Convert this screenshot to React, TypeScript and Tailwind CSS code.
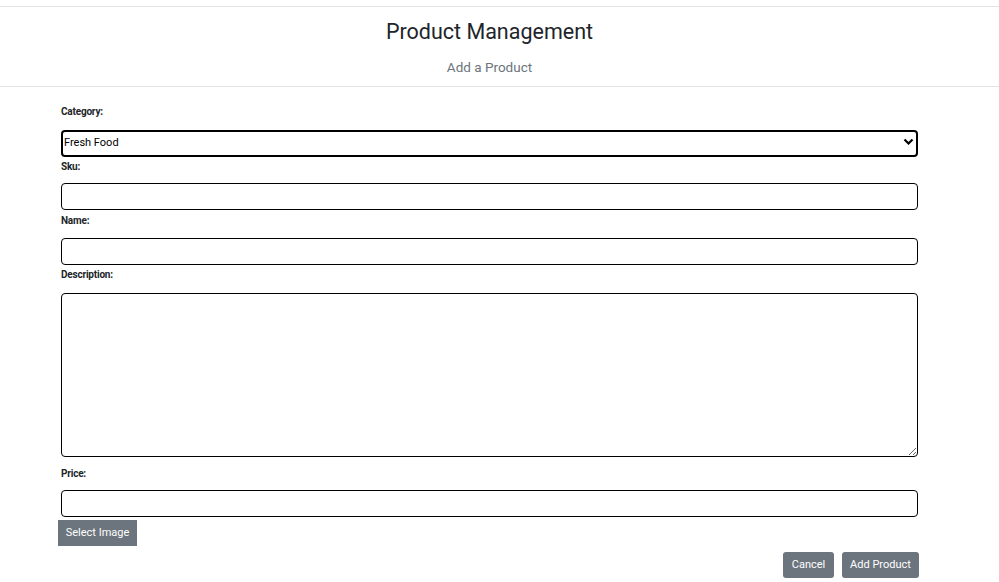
import React from "react";

const font = { fontFamily: "Roboto, 'Liberation Sans', sans-serif" };

function Label({ children, className = "" }: { children: React.ReactNode; className?: string }) {
  return (
    <div className={`h-[14px] leading-[14px] text-[10px] font-bold text-[#212529] tracking-[-0.2px] ${className}`}>
      {children}
    </div>
  );
}

export default function App() {
  return (
    <div className="w-[999px] h-[582px] bg-white overflow-hidden text-[#212529]" style={font}>
      <div className="h-[6px]" />
      <div className="border-t border-b border-[#e3e3e3] h-[81px] w-full">
        <div className="w-[979px] flex flex-col items-center">
          <h1 className="mt-[13px] text-[21.5px] leading-[24px] text-[#212529]">Product Management</h1>
          <div className="mt-[15px] text-[13.5px] leading-[16px] text-[#6c757d]">Add a Product</div>
        </div>
      </div>
      <div className="ml-[61px] w-[857px]">
        <Label className="mt-[18px] mb-[10px]">Category:</Label>
        <div className="relative h-[27px]">
          <select
            defaultValue="Fresh Food"
            className="appearance-none w-full h-[27px] border-2 border-black rounded-[4px] text-[11px] pl-[1px] text-black bg-white outline-none"
            style={font}
          >
            <option>Fresh Food</option>
          </select>
          <svg className="absolute right-[4px] top-[9px] pointer-events-none" width="11" height="8" viewBox="0 0 11 8">
            <path d="M1.5 1.5 L5.5 5.5 L9.5 1.5" stroke="black" strokeWidth="2.2" fill="none" />
          </svg>
        </div>
        <Label className="mt-[4px] mb-[9px]">Sku:</Label>
        <input className="block w-full h-[27px] border border-black rounded-[4px] outline-none" />
        <Label className="mt-[4px] mb-[10px]">Name:</Label>
        <input className="block w-full h-[27px] border border-black rounded-[4px] outline-none" />
        <Label className="mt-[3px] mb-[11px]">Description:</Label>
        <textarea className="block w-full h-[164px] border border-black rounded-[4px] outline-none" />
        <Label className="mt-[10px] mb-[9px]">Price:</Label>
        <input className="block w-full h-[27px] border border-black rounded-[4px] outline-none" />
      </div>
      <div className="ml-[58px] mt-[2px]">
        <button className="w-[79px] h-[26px] bg-[#6c757d] text-white text-[11px]" style={font}>
          Select Image
        </button>
      </div>
      <div className="mt-[6px] w-[919px] flex justify-end gap-[8px]">
        <button className="w-[51px] h-[26px] bg-[#6c757d] text-white text-[11px] rounded-[3px]" style={font}>
          Cancel
        </button>
        <button className="w-[77px] h-[26px] bg-[#6c757d] text-white text-[11px] rounded-[3px]" style={font}>
          Add Product
        </button>
      </div>
    </div>
  );
}
